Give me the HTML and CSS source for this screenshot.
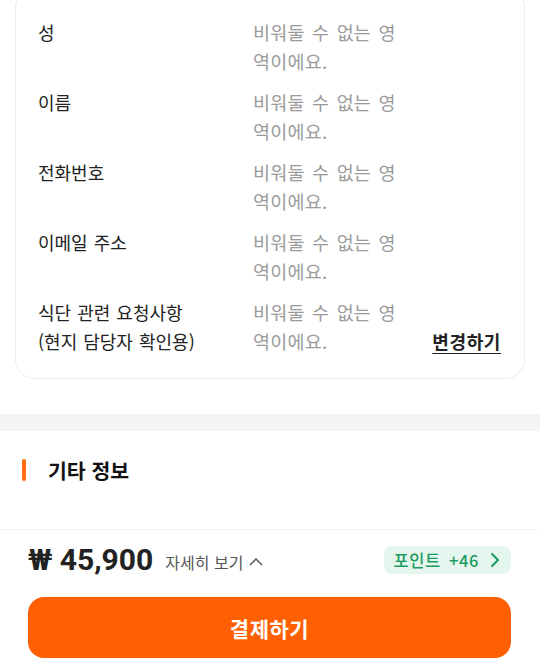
FILE: index.html
```html
<!DOCTYPE html>
<html lang="ko">
<head>
<meta charset="utf-8">
<link rel="stylesheet" href="styles.css">
</head>
<body>
<div class="page">
  <section class="card">
    <div class="row">
      <div class="label">성</div>
      <div class="value">비워둘 수 없는 영역이에요.</div>
      <div class="action"></div>
    </div>
    <div class="row">
      <div class="label">이름</div>
      <div class="value">비워둘 수 없는 영역이에요.</div>
      <div class="action"></div>
    </div>
    <div class="row">
      <div class="label">전화번호</div>
      <div class="value">비워둘 수 없는 영역이에요.</div>
      <div class="action"></div>
    </div>
    <div class="row">
      <div class="label">이메일 주소</div>
      <div class="value">비워둘 수 없는 영역이에요.</div>
      <div class="action"></div>
    </div>
    <div class="row">
      <div class="label">식단 관련 요청사항<br>(현지 담당자 확인용)</div>
      <div class="value">비워둘 수 없는 영역이에요.</div>
      <div class="action"><a class="change">변경하기</a></div>
    </div>
  </section>

  <div class="divider"></div>

  <section class="etc">
    <h2 class="etc-title"><span class="bar"></span>기타 정보</h2>
  </section>

  <footer class="paybar">
    <div class="summary">
      <div class="price-wrap">
        <span class="price">₩ 45,900</span>
        <span class="detail">자세히 보기
          <svg class="caret" width="14" height="9" viewBox="0 0 14 9"><path d="M1.5 7.5 L7 2 L12.5 7.5" fill="none" stroke="#555" stroke-width="1.5" stroke-linecap="round" stroke-linejoin="round"/></svg>
        </span>
      </div>
      <div class="points"><span class="pt-text">포인트 +46</span>
        <svg class="chev" width="10" height="16" viewBox="0 0 10 16"><path d="M2 2 L8 8 L2 14" fill="none" stroke="#1d9a5f" stroke-width="2" stroke-linecap="round" stroke-linejoin="round"/></svg>
      </div>
    </div>
    <button class="pay">결제하기</button>
  </footer>
</div>
</body>
</html>
```
FILE: styles.css
```css
* { box-sizing: border-box; }
html, body {
  margin: 0;
  padding: 0;
  background: #fff;
  overflow: hidden;
}
body {
  font-family: "Noto Sans CJK KR", "Noto Sans", sans-serif;
  color: #222;
}
.page {
  width: 540px;
  height: 661px;
  overflow: hidden;
}
.card {
  margin: -12px 15px 0 15px;
  padding: 29px 23px 22px 22px;
  border: 1px solid #ececec;
  border-radius: 20px;
  display: flex;
  flex-direction: column;
  gap: 12px;
}
.row {
  display: grid;
  grid-template-columns: 215px 148px 1fr;
  font-size: 18px;
  line-height: 29px;
}
.label {
  color: #222;
  word-spacing: 1px;
}
.value {
  color: #9b9b9b;
  font-size: 18.5px;
  word-spacing: 2px;
  letter-spacing: 0.2px;
}
.action {
  display: flex;
  justify-content: flex-end;
  align-items: flex-end;
}
.change {
  font-weight: 700;
  color: #222;
  letter-spacing: 0.6px;
  text-decoration: underline;
  text-underline-offset: 4px;
  text-decoration-thickness: 1px;
}
.divider {
  margin-top: 35px;
  height: 17px;
  background: #f4f4f4;
}
.etc {
  height: 98px;
  padding: 24px 22px 0;
}
.etc-title {
  margin: 0;
  display: flex;
  align-items: center;
  gap: 22px;
  font-size: 20.5px;
  font-weight: 700;
  line-height: 30px;
  color: #111;
}
.bar {
  width: 4px;
  height: 22px;
  border-radius: 2px;
  background: #ff6a13;
}
.paybar {
  border-top: 1px solid #f3f3f3;
  padding: 10px 29px 0 28px;
}
.summary {
  display: flex;
  justify-content: space-between;
  align-items: center;
  height: 40px;
}
.price-wrap {
  display: flex;
  align-items: center;
  gap: 12px;
}
.price {
  font-family: Roboto, "Noto Sans CJK KR", sans-serif;
  font-size: 30px;
  font-weight: 700;
  color: #222;
  line-height: 40px;
}
.detail {
  display: flex;
  align-items: center;
  gap: 6px;
  font-size: 16px;
  color: #555;
  margin-top: 3px;
}
.caret { margin-top: -1px; }
.points {
  display: flex;
  align-items: center;
  gap: 11px;
  height: 28px;
  padding: 0 11px 0 9px;
  border-radius: 8px;
  background: #e5f6ee;
  color: #1d9a5f;
  font-size: 16.5px;
  font-weight: 500;
}
.pt-text {
  word-spacing: 3px;
  letter-spacing: 0.6px;
}
.pay {
  display: block;
  width: 483px;
  height: 61px;
  margin-top: 17px;
  border: none;
  border-radius: 16px;
  background: #ff5f00;
  color: #fff;
  font-family: inherit;
  font-size: 21px;
  font-weight: 700;
  letter-spacing: 0.5px;
}
```
